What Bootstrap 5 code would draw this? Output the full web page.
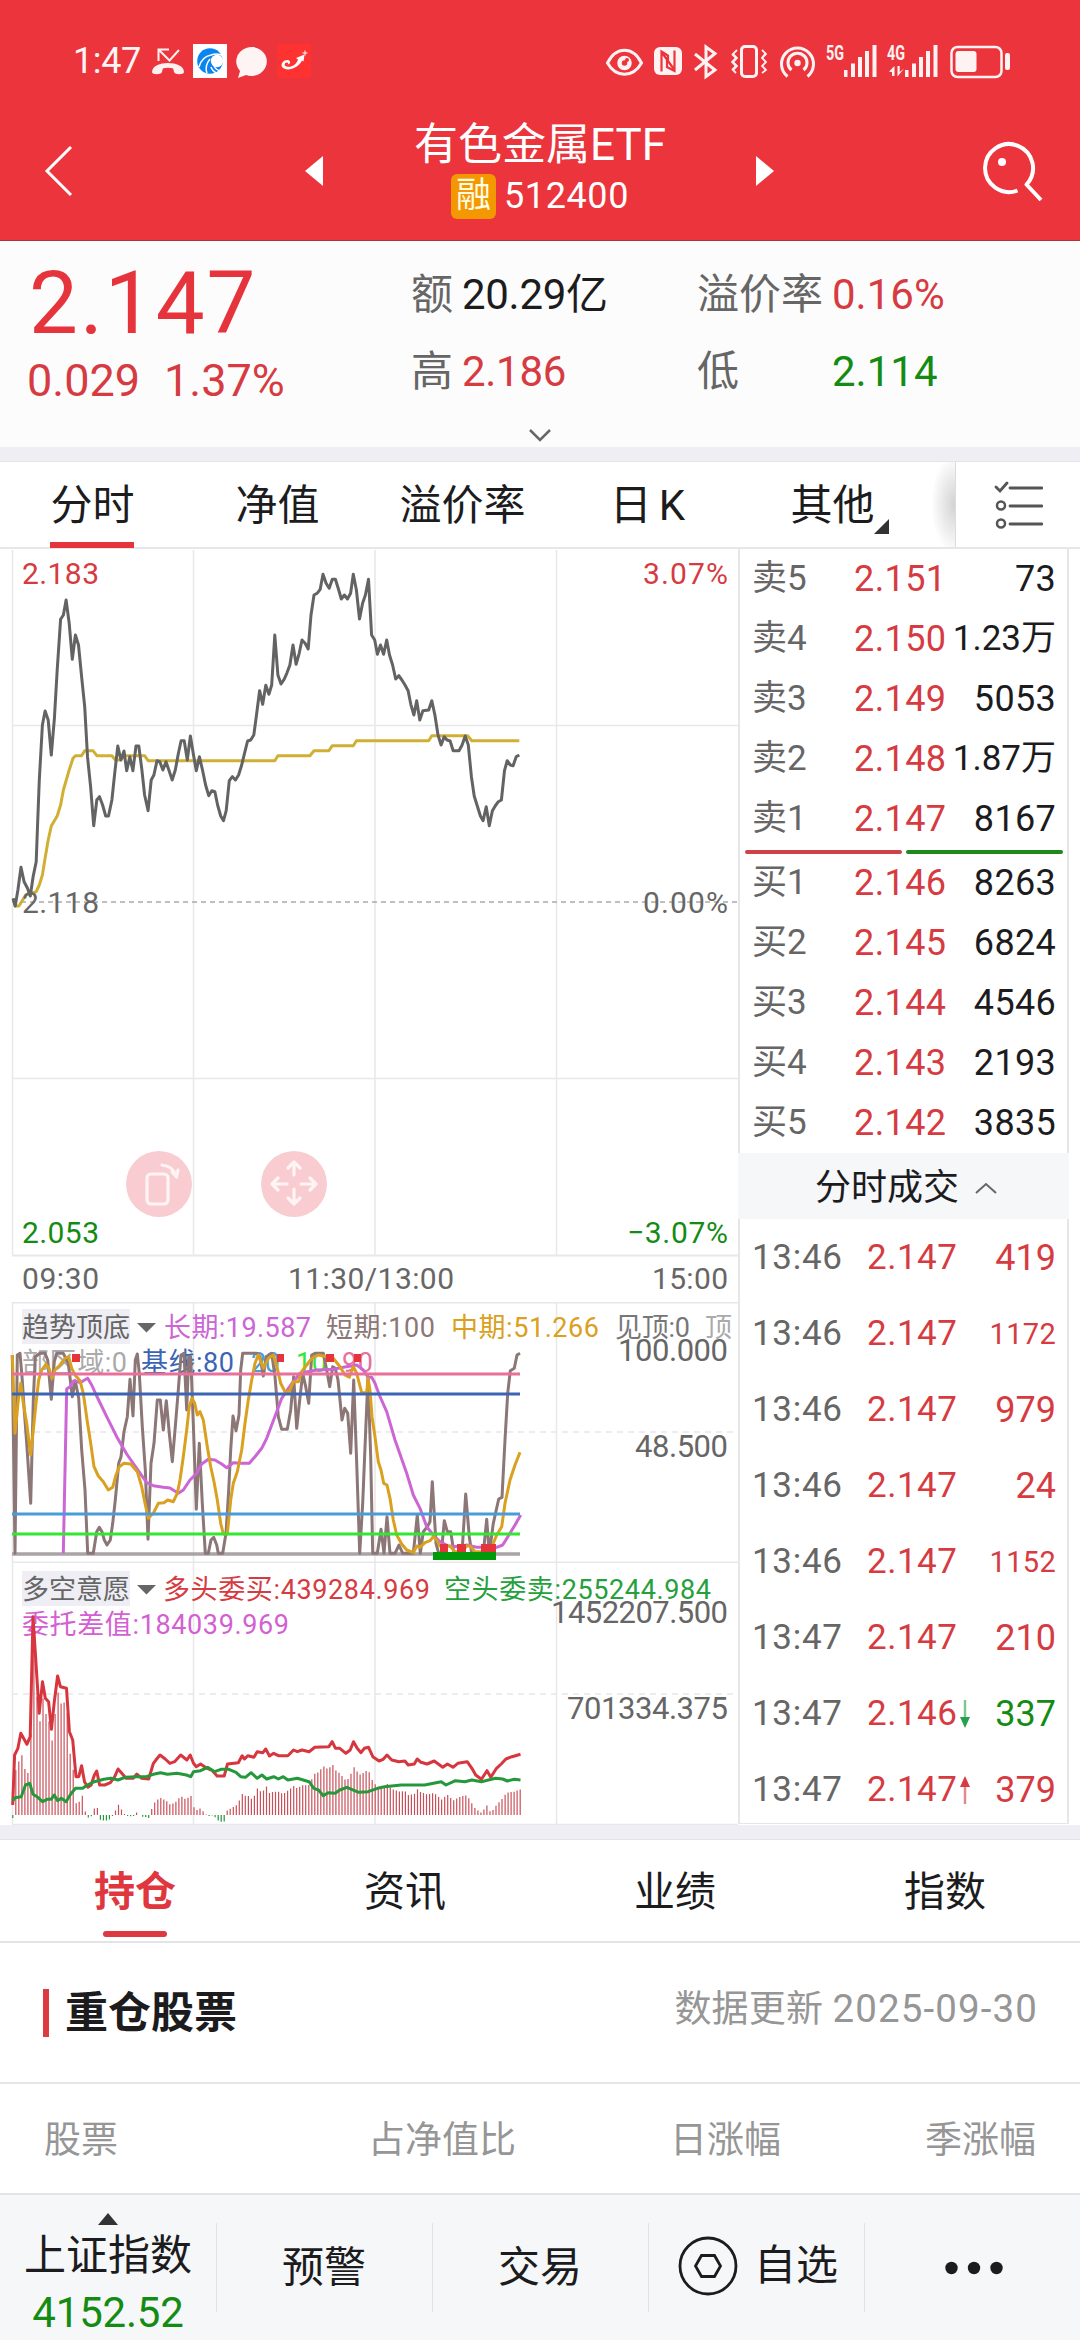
<!DOCTYPE html>
<html lang="zh-CN">
<head>
  <meta charset="UTF-8" />
  <meta name="viewport" content="width=device-width, initial-scale=1.0" />
  <title>有色金属ETF 512400</title>
  <link href="https://cdn.jsdelivr.net/npm/bootstrap@5.3.3/dist/css/bootstrap.min.css" rel="stylesheet" />
  <style>
    body {
      font-family: Roboto, "Noto Sans CJK SC", sans-serif;
      font-size: 42px;
      line-height: 1;
      color: #1c1c1e;
      background: #fff;
      width: 1080px;
      height: 2340px;
      overflow: hidden;
    }

    svg { display: block; flex: none; }
    svg text { font-family: Roboto, "Noto Sans CJK SC", sans-serif; }

    .up { color: #d63b42; }
    .down { color: #148c14; }
    .muted { color: #666; }
    .soft { color: #969696; }

    /* header */
    .top-area { height: 241px; background: #eb343c; color: #fff; border-bottom: 1px solid #a03a40; }
    .status-bar { height: 84px; padding: 38px 68px 0 73px; }
    .clock { font-size: 36px; line-height: 47px; width: 77px; letter-spacing: -.4px; color: #fff4f4; }
    .title-bar { height: 156px; }
    .title-mid { width: 340px; }
    .fund-name { font-size: 44px; line-height: 56px; margin-top: 33px; white-space: nowrap; }
    .fund-code { font-size: 36px; line-height: 45px; margin-top: 1px; letter-spacing: .6px; }
    .tag-rong { width: 45px; height: 45px; background: #f39800; border-radius: 6px; font-size: 35px; line-height: 43px; letter-spacing: 0; color: #fffbe0; }

    /* quote */
    .quote { height: 206px; background: #fcfcfc; }
    .quote-main { width: 411px; padding-left: 27px; }
    .last-price { font-size: 87px; line-height: 124px; color: #e6343c; padding-left: 2px; letter-spacing: 2px; }
    .change { font-size: 45px; line-height: 32px; }
    .quote-side { padding-top: 15px; }
    .quote-item { height: 77px; line-height: 77px; }
    .w-one { width: 51px; }
    .w-label { width: 135px; }
    .w-turn { width: 286px; }
    .quote-item .num { letter-spacing: -.3px; }
    .more-btn { margin: 17px auto 0; }
    .gap-bar { height: 15px; background: #eeeef4; border-bottom: 1px solid #e4e4e8; }

    /* period tabs */
    .period { height: 87px; border-bottom: 2px solid #e6e6e8; }
    .period .tab { width: 185px; line-height: 87px; text-align: center; position: relative; }
    .period .active::after { content: ""; position: absolute; left: 50px; bottom: -1px; width: 84px; height: 6px; background: #e6343c; }
    .period .corner { position: absolute; left: 134px; bottom: 13px; }
    .day-k span { margin-left: 7px; }
    .fade-edge { width: 30px; background: radial-gradient(ellipse 24px 50px at right center, #d2d2d2, #fff); }
    .list-btn { width: 125px; border-left: 1px solid #dcdcdc; }

    /* order book */
    .side { width: 331px; height: 1275px; border: solid #e6e6e8; border-width: 0 2px 1px 2px; }
    .book { font-size: 36px; }
    .book-row { height: 60px; line-height: 60px; padding: 0 11px 0 12px; }
    .book-row .lbl { font-size: 35px; width: 102px; }
    .book-row .px { letter-spacing: .4px; }
    .book-row .vol { letter-spacing: .3px; }
    .book-row .wan { font-size: 35px; letter-spacing: 0; }
    .split { height: 3px; margin: 1px 4px 0 5px; }
    .split i { height: 4px; border-radius: 2px; }
    .deal-head { height: 66px; margin: 0 -2px; background: #f6f7f9; font-size: 36px; padding: 3px 0 0 5px; }
    .deals { height: 605px; padding-top: 1px; overflow: hidden; }
    .deal-row { height: 76px; line-height: 78px; padding: 0 11px 0 12px; font-size: 35px; }
    .deal-row .t { width: 115px; letter-spacing: .7px; }
    .deal-row .px { width: 93px; letter-spacing: .5px; }
    .deal-row .qty { font-size: 36px; }
    .deal-row .qty.long { font-size: 29px; letter-spacing: .3px; }

    /* lower part */
    .info-tabs { height: 103px; border-bottom: 2px solid #e4e4e6; line-height: 104px; font-size: 41px; }
    .info-tabs .tab { width: 270px; text-align: center; position: relative; }
    .info-tabs .active { color: #e0363e; font-weight: 700; }
    .info-tabs .active::after { content: ""; position: absolute; left: 103px; bottom: 4px; width: 64px; height: 6px; border-radius: 3px; background: #dc3940; }
    .holding-head { height: 141px; border-bottom: 2px solid #e6e6e8; padding: 0 43px; }
    .holding-head h2 { font-size: 43px; line-height: 48px; font-weight: 700; border-left: 6px solid #dc3940; padding-left: 16px; }
    .holding-head .date { font-size: 37px; letter-spacing: .2px; margin-top: -6px; white-space: nowrap; }
    .holding-head .date span { font-size: 38.5px; letter-spacing: 1.1px; margin-right: -1px; }
    .cols { height: 109px; font-size: 37px; padding: 3px 44px 0; }
    .bottom-bar { height: 147px; background: #f6f7f9; border-top: 2px solid #e4e4e6; }
    .bottom-bar .cell { width: 216px; }
    .bottom-bar .cell + .cell::before { content: ""; position: absolute; left: 0; top: 28px; height: 89px; border-left: 1px solid #e2e3e6; }
    .index-val { font-size: 42px; line-height: 52px; letter-spacing: -.2px; }
  </style>
</head>
<body>
  <header class="top-area">
    <div class="status-bar d-flex">
      <div class="clock">1:47</div>
      <!-- notification icons -->
      <svg width="164" height="46" viewBox="150 38 164 46">
        <g fill="none" stroke="#fff0f0" stroke-width="2">
          <path d="M158.500 61V49.500H169M159 50l10.500 10.500L179 50" />
        </g>
        <path d="M152 72c0-12 32-12 32 0 0 3-9 3-10 0l-.8-3.500c-3-1-7.400-1-10.400 0L162 72c-1 3-10 3-10 0z" fill="#fff0f0" />
        <rect x="193" y="44" width="34" height="34" fill="#fff" />
        <circle cx="210" cy="61" r="12.800" fill="#0c84f0" />
        <circle cx="217" cy="61" r="6.200" fill="#fff" />
        <path d="M199 67c2-7 6-11 12-12 5-2 9-1 12 1M207 73c-2-5-1-9 3-14M214 66c2 4 5 5 8 5M211 67c1 3 3 5 6 6" fill="none" stroke="#fff" stroke-width="1.500" />
        <path d="M238 78l2-7a15.300 14.500 0 1 1 6 4z" fill="#fff4f4" />
        <rect x="277" y="44" width="34" height="34" fill="#ff3232" />
        <path d="M304.500 54.500l-8.500 3.500 2 1.500c-2 6-7 8-11.500 7-3-1-2-4 .5-4 1.500 0 1.500 1.500.5 2 3 0 4-4 0-4.500-4 0-7 3.500-5.500 7 4 5 16 2 20-6.500l1.500 1z" fill="#fff" />
        <path d="M302.500 53h5M305 50.500v5" stroke="#fff" stroke-width="1" />
      </svg>
      <!-- system indicators -->
      <svg class="ms-auto" width="410" height="46" viewBox="602 38 410 46">
        <g fill="none" stroke="#fff2f2" stroke-width="3">
          <path d="M607.500 63C616 46 633 46 641.500 63 633 78 616 78 607.500 63z" />
          <circle cx="624.500" cy="63" r="5" stroke-width="4.500" />
          <path d="M695 54l20 16-9 6.500V47l9 6.500L695 70" />
          <rect x="741.500" y="46.500" width="15" height="30" rx="3.500" />
          <path d="M737 50l-4 4 4 4-4 4 4 4-4 4 3 3M732 54l4 4-4 4 4 4-4 4M762 50l4 4-4 4 4 4-4 4 4 4-4 3M765 54l-3 4 4 4-4 4 4 4" stroke-width="1.800" />
          <path d="M787.500 76.500a16 16 0 1 1 20 0M791.500 70a9.500 9.500 0 1 1 12 0" />
          <rect x="951.500" y="47" width="50" height="30" rx="6" stroke-width="2.500" />
        </g>
        <g fill="#fff2f2">
          <circle cx="627" cy="60" r="2" fill="#eb343c" />
          <rect x="654" y="47" width="28" height="28" rx="6" />
          <path d="M661.500 71.500V51.500l6.500 4v7M661.500 52l13 18M667 57v10l7.500 4V50.500" fill="none" stroke="#eb343c" stroke-width="2.200" />
          <circle cx="797.500" cy="63" r="3.200" />
          <path d="M844 70h3.500v7H844zM851 63.500h4V77h-4zM858 57h4v20h-4zM865 51h4v26h-4zM872.500 45h4v32h-4z" />
          <path d="M905 70h3.500v7H905zM912 63.500h4V77h-4zM919 57h4v20h-4zM926 51h4v26h-4zM933.500 45h4v32h-4z" />
          <path d="M892 66v10h2.500V66l-5 5v1h3zM897.500 66h2.200v6l4.500-3.500-6.700 8z" />
          <rect x="955.500" y="51" width="21" height="21" rx="3" />
          <rect x="1005" y="53" width="5" height="17" rx="2" />
          <text x="826" y="60" font-size="20" font-weight="700" textLength="18" lengthAdjust="spacingAndGlyphs">5G</text>
          <text x="887" y="60" font-size="20" font-weight="700" textLength="18" lengthAdjust="spacingAndGlyphs">4G</text>
        </g>
      </svg>
    </div>
    <div class="title-bar d-flex">
      <svg width="120" height="156" viewBox="0 84 120 156"><path d="M71 147L47 171l24 24" fill="none" stroke="#fff" stroke-width="3" /></svg>
      <svg width="250" height="156" viewBox="120 84 250 156"><path d="M323 156v30l-18-15z" fill="#fff" /></svg>
      <div class="title-mid text-center">
        <div class="fund-name">有色金属ETF</div>
        <div class="fund-code d-flex justify-content-center"><span class="tag-rong me-2">融</span><span>512400</span></div>
      </div>
      <svg width="250" height="156" viewBox="710 84 250 156"><path d="M756 156v30l18-15z" fill="#fff" /></svg>
      <svg width="120" height="156" viewBox="960 84 120 156">
        <path d="M1017.500 190.500A24 24 0 1 1 1026.500 184.500L1041 200" fill="none" stroke="#fff" stroke-width="4" stroke-linejoin="round" />
        <circle cx="1002" cy="162" r="4" fill="#fff" />
      </svg>
    </div>
  </header>

  <section class="quote">
    <div class="d-flex">
      <div class="quote-main up">
        <div class="last-price">2.147</div>
        <div class="change d-flex"><span>0.029</span><span class="ms-4">1.37%</span></div>
      </div>
      <div class="quote-side w-turn">
        <div class="quote-item d-flex"><span class="muted w-one">额</span><span class="num">20.29亿</span></div>
        <div class="quote-item d-flex"><span class="muted w-one">高</span><span class="num up">2.186</span></div>
      </div>
      <div class="quote-side">
        <div class="quote-item d-flex"><span class="muted w-label">溢价率</span><span class="up">0.16%</span></div>
        <div class="quote-item d-flex"><span class="muted w-label">低</span><span class="down">2.114</span></div>
      </div>
    </div>
    <svg class="more-btn" width="24" height="18" viewBox="0 0 24 18"><path d="M2 3l10 10L22 3" fill="none" stroke="#666" stroke-width="2.500" /></svg>
  </section>
  <div class="gap-bar"></div>

  <nav class="period d-flex">
    <div class="tab active">分时</div>
    <div class="tab">净值</div>
    <div class="tab">溢价率</div>
    <div class="tab day-k">日<span>K</span></div>
    <div class="tab">其他<svg class="corner" width="15" height="15"><path d="M15 0v15H0z" fill="#333" /></svg></div>
    <div class="fade-edge"></div>
    <div class="list-btn d-flex align-items-center justify-content-center">
      <svg width="50" height="50" viewBox="992 480 50 50">
        <path d="M1009 488h32M1009 506h32M1009 524h32M995 487l4 4 7-8" fill="none" stroke="#555" stroke-width="2.800" stroke-linecap="round" />
        <g fill="none" stroke="#555" stroke-width="2.500"><circle cx="1000" cy="505.500" r="4" /><circle cx="1000" cy="523.500" r="4" /></g>
      </svg>
    </div>
  </nav>

  <main class="d-flex">
    <div>
      <!-- intraday chart -->
      <svg width="738" height="753" viewBox="0 549 738 753">
        <g fill="none" stroke="#e8e8ea" stroke-width="1.500">
          <path d="M12.500 550V1255M193.500 550V1255M375 550V1255M556.500 550V1255M12 725.500H738M12 1078.500H738" />
          <path d="M12 1255.500H738" stroke-width="2" />
        </g>
        <path d="M12 902H738" stroke="#aaa" stroke-width="1.500" stroke-dasharray="5 4" />
        <g fill="none" stroke-width="3" stroke-linejoin="round">
          <polyline id="avgLine" stroke="#d0b034" />
          <polyline id="priceLine" stroke="#636363" />
        </g>
        <g font-size="30" fill="#666">
          <text x="22" y="584" fill="#d63b42" textLength="77">2.183</text>
          <text x="22" y="913" textLength="77">2.118</text>
          <text x="22" y="1242.500" fill="#148c14" textLength="77">2.053</text>
          <text x="643" y="584" fill="#d63b42" textLength="85">3.07%</text>
          <text x="643" y="913" textLength="85">0.00%</text>
          <text x="627" y="1242.500" fill="#148c14" textLength="101">−3.07%</text>
          <text x="22" y="1289" textLength="77">09:30</text>
          <text x="288" y="1289" textLength="166">11:30/13:00</text>
          <text x="652" y="1289" textLength="76">15:00</text>
        </g>
        <circle cx="159" cy="1184" r="33" fill="#f8ccd0" />
        <circle cx="294" cy="1184" r="33" fill="#f8ccd0" />
        <g fill="none" stroke="#fff4f4" stroke-width="3.200" stroke-linecap="round" stroke-linejoin="round">
          <rect x="147" y="1174" width="21" height="30" rx="4" />
          <path d="M162 1165q11 1 14 11M172 1172l4.500 5 1.500-7" />
          <path d="M294 1162v13M288 1168l6-6 6 6M294 1189v15M288 1198l6 6 6-6M272 1184h15M278 1178l-6 6 6 6M301 1184h15M310 1178l6 6-6 6" />
        </g>
      </svg>

      <!-- 趋势顶底 -->
      <svg width="738" height="261" viewBox="0 1302 738 261">
        <g fill="none" stroke="#e8e8ea" stroke-width="1.500">
          <path d="M12.500 1301V1563M193.500 1301V1563M375 1301V1563M556.500 1301V1563" />
          <path d="M12 1302.500H738M12 1562.500H738" stroke-width="2" />
          <path d="M12 1432H738" stroke-dasharray="6 5" />
        </g>
        <rect x="22" y="1309" width="108" height="35" fill="#eeeef4" />
        <path d="M137 1323h19l-9.500 9.500z" fill="#666" />
        <g font-size="27" fill="#666">
          <text x="22" y="1337">趋势顶底</text>
          <text x="164" y="1337" fill="#cc66d4" textLength="147">长期:19.587</text>
          <text x="326" y="1337" fill="#8c7676" textLength="109">短期:100</text>
          <text x="451" y="1337" fill="#daa020" textLength="148">中期:51.266</text>
          <text x="615" y="1337" fill="#777" textLength="75">见顶:0</text>
          <text x="705" y="1337" fill="#aaa">顶</text>
          <text x="22" y="1372" fill="#aaa" textLength="105">部区域:0</text>
          <text x="141" y="1372" fill="#3c64b4" textLength="93">基线:80</text>
          <text x="251" y="1372" fill="#4a9cd8" textLength="29">20</text>
          <text x="296" y="1372" fill="#32e632" textLength="31">10</text>
          <text x="342" y="1372" fill="#e8709a" textLength="31">90</text>
        </g>
        <g font-size="31" fill="#666">
          <text x="618" y="1361" textLength="110">100.000</text>
          <text x="635" y="1457" textLength="93">48.500</text>
        </g>
        <g fill="none" stroke-width="3" stroke-linejoin="round">
          <path d="M12 1554H520" stroke="#aaa4a6" stroke-width="3.500" />
          <polyline id="shortLine" stroke="#8c7676" />
          <polyline id="longLine" stroke="#cc66d4" />
          <polyline id="midLine" stroke="#daa020" />
          <path d="M12 1374H520" stroke="#e8709a" />
          <path d="M12 1394H520" stroke="#3c64b4" />
          <path d="M12 1514H520" stroke="#4a9cd8" />
          <path d="M12 1534H520" stroke="#32e632" />
        </g>
        <path d="M72 1354h8v8h-8zM277 1354h7v8h-7zM326 1354h8v8h-8zM354 1354h7v8h-7zM440 1544h8v8h-8zM457 1544h9v8h-9zM481 1544h15v8h-15z" fill="#e6343c" />
        <path d="M433 1552h63v8h-63z" fill="#009a0a" />
      </svg>

      <!-- 多空意愿 -->
      <svg width="738" height="262" viewBox="0 1563 738 262">
        <g fill="none" stroke="#e8e8ea" stroke-width="1.500">
          <path d="M12.500 1563V1825M193.500 1563V1825M375 1563V1825M556.500 1563V1825M12 1824.500H738" />
          <path d="M12 1694H738" stroke-dasharray="6 5" />
        </g>
        <rect x="22" y="1571" width="108" height="35" fill="#eeeef4" />
        <path d="M137 1585h19l-9.500 9.500z" fill="#666" />
        <g font-size="27" fill="#666">
          <text x="22" y="1599">多空意愿</text>
          <text x="163" y="1599" fill="#d63b42" textLength="267">多头委买:439284.969</text>
          <text x="444" y="1599" fill="#26a03c" textLength="267">空头委卖:255244.984</text>
          <text x="22" y="1634" fill="#d35fd3" textLength="267">委托差值:184039.969</text>
        </g>
        <g font-size="31" fill="#666">
          <text x="551" y="1623" textLength="177">1452207.500</text>
          <text x="567" y="1719" textLength="161">701334.375</text>
        </g>
        <path id="barsUp" stroke="#c8505a" stroke-width="1.200" />
        <path id="barsDown" stroke="#26963c" stroke-width="1.200" />
        <g fill="none" stroke-width="3" stroke-linejoin="round">
          <polyline id="buyLine" stroke="#d8363e" />
          <polyline id="sellLine" stroke="#26983c" />
        </g>
      </svg>
    </div>

    <aside class="side">
      <div class="book">
        <div id="asks"></div>
        <div class="split d-flex justify-content-between">
          <i style="width: 157px; background: #cc434a"></i>
          <i style="width: 157px; background: #1e8a1e"></i>
        </div>
        <div id="bids"></div>
      </div>
      <div class="deal-head d-flex align-items-center justify-content-center">
        分时成交
        <svg class="ms-3" width="22" height="14" viewBox="0 0 22 14"><path d="M1 12L11 3l10 9" fill="none" stroke="#666" stroke-width="2" /></svg>
      </div>
      <div class="deals" id="deals"></div>
    </aside>
  </main>
  <div class="gap-bar"></div>

  <nav class="info-tabs d-flex">
    <div class="tab active">持仓</div>
    <div class="tab">资讯</div>
    <div class="tab">业绩</div>
    <div class="tab">指数</div>
  </nav>
  <div class="holding-head d-flex align-items-center justify-content-between">
    <h2 class="mb-0">重仓股票</h2>
    <div class="date soft">数据更新 <span>2025-09-30</span></div>
  </div>
  <div class="cols soft d-flex align-items-center">
    <div class="text-start" style="width: 180px">股票</div>
    <div class="text-end" style="width: 292px">占净值比</div>
    <div class="text-end" style="width: 265px">日涨幅</div>
    <div class="text-end" style="width: 255px">季涨幅</div>
  </div>

  <footer class="bottom-bar d-flex">
    <div class="cell position-relative d-flex flex-column align-items-center">
      <svg class="mt-3" width="22" height="14"><path d="M11 2l10 12H1z" fill="#333" /></svg>
      <div style="line-height: 62px">上证指数</div>
      <div class="index-val down">4152.52</div>
    </div>
    <div class="cell position-relative d-flex align-items-center justify-content-center">预警</div>
    <div class="cell position-relative d-flex align-items-center justify-content-center">交易</div>
    <div class="cell position-relative d-flex align-items-center justify-content-center ps-1 pb-1">
      <svg class="me-3" width="60" height="60" viewBox="-30 -30 60 60">
        <g fill="none" stroke="#1c1c1e" stroke-width="2.800"><circle r="28" /><path d="M-12.500 0l6-10.500h13l6 10.500-6 10.500h-13z" /></g>
      </svg>
      <span>自选</span>
    </div>
    <div class="cell position-relative d-flex align-items-center justify-content-center ps-1">
      <svg width="60" height="16" viewBox="0 0 60 16"><g fill="#1c1c1e"><circle cx="7.500" cy="8" r="6.200" /><circle cx="30" cy="8" r="6.200" /><circle cx="52.500" cy="8" r="6.200" /></g></svg>
    </div>
  </footer>

  <script src="https://cdn.jsdelivr.net/npm/bootstrap@5.3.3/dist/js/bootstrap.bundle.min.js"></script>
  <script>
    const price = "38,1075 44,1098 52,1050 61,982 70,1025 80,1045 88,1068 96,1010 105,965 109,860 114,720 123,555 131,513 140,540 149,645 158,535 166,390 176,238 184,225 192,180 201,250 210,358 219,285 228,315 237,410 246,500 254,650 263,740 272,857 281,780 289,770 298,795 307,828 315,828 325,780 333,700 342,618 351,660 360,633 368,692 377,650 386,692 395,618 403,618 412,690 420,765 430,812 439,720 447,705 456,662 464,665 473,690 482,665 491,692 500,720 509,690 518,640 526,602 535,602 544,660 553,588 562,645 570,692 579,650 588,690 597,735 606,767 615,752 624,755 632,795 641,828 649,842 657,812 666,722 675,710 684,720 693,705 702,675 710,640 719,603 728,600 737,585 745,525 754,452 763,493 772,436 781,463 789,435 798,285 807,405 816,432 825,418 833,400 842,375 851,315 860,373 869,340 877,300 886,310 895,327 903,225 912,165 921,160 930,148 938,103 947,130 956,145 965,118 974,118 983,148 991,177 1000,165 1009,177 1018,160 1026,103 1035,150 1044,237 1053,190 1061,165 1070,118 1079,285 1088,300 1096,343 1105,315 1114,343 1123,300 1131,345 1140,375 1149,417 1158,407 1167,420 1176,435 1185,452 1193,493 1202,525 1210,482 1219,540 1228,512 1245,510 1254,482 1263,525 1272,585 1281,615 1290,590 1298,600 1307,603 1316,632 1333,632 1342,615 1351,588 1360,615 1369,710 1377,768 1386,798 1395,828 1403,842 1412,800 1421,857 1430,812 1438,798 1447,785 1456,780 1465,692 1473,662 1482,675 1490,677 1499,650 1508,645";
    const average = "38,1075 44,1098 55,1098 75,1065 105,1055 114,1035 123,1005 131,955 140,900 149,858 166,828 176,795 184,750 201,690 212,655 219,647 237,647 246,632 270,632 281,647 325,647 335,660 350,660 362,647 420,647 430,662 798,662 807,647 900,647 912,632 955,632 965,617 1026,617 1035,602 1245,602 1254,587 1358,587 1370,602 1508,602";
    const shortTerm = "37,195 45,790 52,195 60,190 66,260 72,350 80,460 92,640 100,330 106,200 120,190 135,190 143,210 154,328 163,215 170,190 190,190 205,220 217,320 226,272 236,325 245,480 255,600 263,790 280,790 290,725 298,712 306,725 313,750 321,765 331,750 338,700 346,630 356,520 363,500 372,425 382,380 390,268 399,378 406,210 412,192 418,250 427,410 436,540 444,748 453,520 462,460 472,330 481,330 490,420 499,332 508,430 517,515 526,410 535,300 543,195 552,190 560,360 566,200 572,200 580,400 589,658 598,460 607,640 616,790 625,790 633,750 641,742 650,765 655,790 668,790 678,730 686,600 692,480 699,378 708,422 717,375 722,240 728,190 770,190 780,200 790,258 798,200 815,190 825,260 835,380 845,418 862,418 872,360 881,260 890,415 899,330 908,250 917,290 926,340 935,195 945,190 970,190 980,240 989,290 998,230 1006,235 1014,270 1026,390 1034,355 1043,370 1052,490 1061,270 1070,520 1079,790 1088,640 1098,400 1104,260 1112,500 1118,790 1132,790 1143,718 1152,790 1161,680 1170,790 1185,790 1197,765 1208,790 1240,790 1252,675 1261,790 1270,725 1282,710 1290,695 1297,575 1308,760 1316,790 1324,790 1333,692 1342,725 1352,725 1362,790 1386,790 1397,612 1408,740 1415,790 1450,790 1460,688 1468,790 1480,700 1496,627 1506,622 1515,450 1523,310 1531,242 1543,235 1551,195 1560,190";
    const midTerm = "37,195 45,430 55,330 62,280 70,340 80,400 92,495 100,420 108,340 116,270 125,240 138,222 147,235 156,265 165,240 180,225 195,205 206,200 215,235 225,255 240,272 250,310 262,395 272,460 282,530 295,558 310,575 325,600 338,592 348,555 358,530 372,520 392,522 412,545 425,590 435,640 445,685 460,670 475,640 492,638 503,630 520,635 532,610 540,570 550,500 560,420 568,350 576,325 584,340 592,375 600,365 610,390 622,470 632,530 642,575 652,630 662,700 670,732 682,732 692,630 700,580 712,545 725,480 735,400 745,330 755,270 765,220 775,195 790,235 805,205 820,195 832,235 842,280 855,305 868,305 880,275 895,275 905,245 920,225 935,205 955,195 980,200 1000,205 1020,230 1035,255 1048,262 1060,230 1070,250 1085,308 1100,308 1104,265 1110,300 1116,380 1125,440 1135,515 1143,540 1151,580 1161,585 1170,625 1180,690 1190,735 1205,762 1220,780 1240,788 1250,768 1260,772 1275,758 1290,752 1300,740 1310,750 1320,768 1350,768 1365,785 1385,785 1400,768 1410,768 1425,785 1470,785 1480,760 1490,735 1505,710 1515,640 1530,570 1545,525 1560,487";
    const longTerm = "190,790 200,297 210,290 222,272 240,278 250,272 263,265 275,285 290,318 320,380 350,440 380,492 410,535 440,578 460,587 490,592 510,594 535,610 550,600 570,570 590,550 605,522 625,508 645,510 665,522 680,533 700,518 725,520 748,520 765,500 785,475 800,445 815,405 830,365 845,325 862,300 880,275 900,250 950,240 1000,238 1030,232 1070,225 1090,240 1105,262 1115,262 1125,280 1140,320 1160,365 1185,450 1220,550 1240,615 1260,655 1280,710 1300,735 1320,755 1345,768 1380,770 1400,765 1430,772 1490,772 1508,765 1530,730 1545,705 1562,675";
    const buy = "27,735 31,585 38,565 44,520 50,535 57,553 64,530 70,170 83,460 90,365 96,415 103,425 109,508 115,425 122,348 128,380 141,385 147,515 154,540 161,650 167,650 173,617 179,665 186,682 193,675 200,645 205,633 211,675 222,675 234,668 243,650 250,627 258,640 267,655 282,655 290,642 300,655 315,657 325,610 332,597 339,585 350,597 360,610 370,605 383,585 396,600 403,585 410,610 416,620 425,612 435,622 450,632 460,648 475,648 482,612 505,608 513,587 518,597 525,587 538,592 545,575 557,578 563,567 571,588 580,580 590,587 610,587 622,570 630,575 640,570 655,575 667,562 697,560 704,545 711,565 720,565 733,580 742,570 749,545 757,565 765,578 772,565 781,562 790,590 803,603 812,598 820,585 830,600 845,605 858,603 865,615 878,612 884,597 892,607 905,612 920,603 938,622 948,612 960,622 970,610 990,605 1000,625 1008,645 1020,658 1032,632 1040,652 1052,625 1062,612 1072,597 1085,590 1103,583";
    const sell = "27,722 32,713 45,710 54,675 63,670 70,703 80,712 90,725 100,718 108,718 115,705 122,722 130,715 140,725 150,702 160,685 175,685 185,675 200,665 220,658 235,655 250,660 265,652 290,650 310,650 325,643 340,638 355,643 375,640 395,645 404,650 410,635 425,632 440,622 455,635 468,628 485,628 500,637 510,650 520,652 532,638 545,655 555,645 565,657 580,650 590,657 600,650 610,660 630,655 655,665 665,685 675,690 685,707 695,698 710,700 720,690 735,682 745,688 760,697 780,695 800,685 815,680 850,675 900,675 935,665 945,675 965,662 985,665 1000,660 1020,665 1050,655 1065,657 1075,663 1090,658 1103,660";

    function toPoints(data, sx, top) {
      return data.split(" ").map(p => {
        const [x, y] = p.split(",").map(Number);
        return [x / sx, top + y / 3];
      });
    }

    function drawLine(id, points) {
      document.getElementById(id).setAttribute("points", points.map(p => p[0].toFixed(1) + "," + p[1].toFixed(1)).join(" "));
    }

    function valueAt(points, x) {
      for (let i = 1; i < points.length; i++) {
        if (x <= points[i][0]) {
          const [a, b] = [points[i - 1], points[i]];
          return a[1] + (b[1] - a[1]) * (x - a[0]) / (b[0] - a[0]);
        }
      }
      return points[points.length - 1][1];
    }

    drawLine("priceLine", toPoints(price, 2.904, 540));
    drawLine("avgLine", toPoints(average, 2.904, 540));
    drawLine("shortLine", toPoints(shortTerm, 3, 1290));
    drawLine("midLine", toPoints(midTerm, 3, 1290));
    drawLine("longLine", toPoints(longTerm, 3, 1290));

    const buyPts = toPoints(buy, 2.119, 1560);
    const sellPts = toPoints(sell, 2.119, 1560);
    drawLine("buyLine", buyPts);
    drawLine("sellLine", sellPts);

    // histogram: difference between both sides, one bar per minute
    let upBars = "", downBars = "";
    for (let x = 12.8; x < 521; x += 3.02) {
      const diff = valueAt(sellPts, x) - valueAt(buyPts, x);
      const bar = "M" + x.toFixed(1) + " 1815v" + (-diff).toFixed(1);
      if (diff > 0) upBars += bar; else downBars += bar;
    }
    document.getElementById("barsUp").setAttribute("d", upBars);
    document.getElementById("barsDown").setAttribute("d", downBars);

    const asks = [["卖5", "2.151", "73"], ["卖4", "2.150", "1.23万"], ["卖3", "2.149", "5053"], ["卖2", "2.148", "1.87万"], ["卖1", "2.147", "8167"]];
    const bids = [["买1", "2.146", "8263"], ["买2", "2.145", "6824"], ["买3", "2.144", "4546"], ["买4", "2.143", "2193"], ["买5", "2.142", "3835"]];
    const bookRow = r => `<div class="book-row d-flex"><span class="lbl muted">${r[0]}</span><span class="px up">${r[1]}</span><span class="ms-auto vol ${r[2].endsWith("万") ? "wan" : ""}">${r[2]}</span></div>`;
    document.getElementById("asks").innerHTML = asks.map(bookRow).join("");
    document.getElementById("bids").innerHTML = bids.map(bookRow).join("");

    const arrows = {
      down: '<svg width="10" height="28"><path d="M5 0v22" stroke="#7cc890" stroke-width="2.500"/><path d="M0 17h10L5 28z" fill="#26a050"/></svg>',
      up: '<svg width="10" height="28"><path d="M5 28V6" stroke="#e08a90" stroke-width="2.500"/><path d="M0 11h10L5 0z" fill="#d63b42"/></svg>'
    };
    const deals = [
      ["13:46", "2.147", "419"], ["13:46", "2.147", "1172"], ["13:46", "2.147", "979"], ["13:46", "2.147", "24"],
      ["13:46", "2.147", "1152"], ["13:47", "2.147", "210"], ["13:47", "2.146", "337", "down"], ["13:47", "2.147", "379", "up"]
    ];
    document.getElementById("deals").innerHTML = deals.map(d => `
      <div class="deal-row d-flex align-items-center">
        <span class="t muted">${d[0]}</span><span class="px up">${d[1]}</span>${arrows[d[3]] || ""}
        <span class="qty ms-auto ${d[3] === "down" ? "down" : "up"} ${d[2].length > 3 ? "long" : ""}">${d[2]}</span>
      </div>`).join("");
  </script>
</body>
</html>
